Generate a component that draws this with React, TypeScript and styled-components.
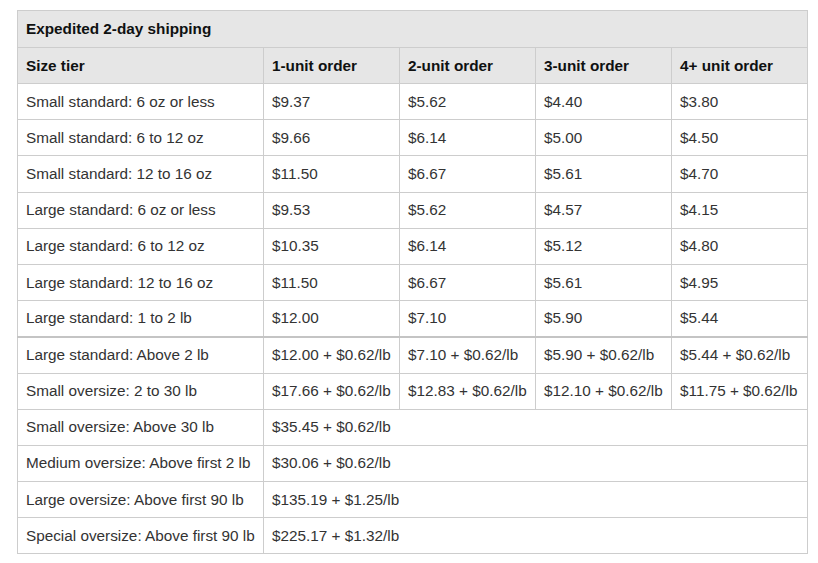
import React from "react";
import styled, { createGlobalStyle } from "styled-components";

const Global = createGlobalStyle`
  html, body { margin: 0; padding: 0; background: #fff; }
  body { font-family: "Liberation Sans", Arial, sans-serif; }
`;

const Page = styled.div`
  padding: 10px 0 0 17px;
`;

const Table = styled.table`
  border-collapse: collapse;
  table-layout: fixed;
  width: 790px;
  font-family: "Liberation Sans", Arial, sans-serif;
  font-size: 15.3px;
  color: #333;
  border: 1px solid #cdcdcd;
`;

const TitleCell = styled.th`
  background: #e6e6e6;
  color: #0f1111;
  font-weight: 700;
  text-align: left;
  height: 37px;
  padding: 0 8px;
  border: 1px solid #cdcdcd;
  box-sizing: border-box;
`;

const HeadCell = styled.th`
  background: #e6e6e6;
  color: #0f1111;
  font-weight: 700;
  text-align: left;
  height: 36px;
  padding: 0 8px;
  border: 1px solid #cdcdcd;
  box-sizing: border-box;
`;

const Row = styled.tr<{ $divider?: boolean }>`
  border-top: ${(p) => (p.$divider ? "2px solid #c4c4c4" : "1px solid #cdcdcd")};
`;

const Cell = styled.td`
  height: 36.2px;
  padding: 0 8px;
  border: 1px solid #cdcdcd;
  white-space: nowrap;
  box-sizing: border-box;
`;

type R = { tier: string; prices: string[]; divider?: boolean };

const rows: R[] = [
  { tier: "Small standard: 6 oz or less", prices: ["$9.37", "$5.62", "$4.40", "$3.80"] },
  { tier: "Small standard: 6 to 12 oz", prices: ["$9.66", "$6.14", "$5.00", "$4.50"] },
  { tier: "Small standard: 12 to 16 oz", prices: ["$11.50", "$6.67", "$5.61", "$4.70"] },
  { tier: "Large standard: 6 oz or less", prices: ["$9.53", "$5.62", "$4.57", "$4.15"] },
  { tier: "Large standard: 6 to 12 oz", prices: ["$10.35", "$6.14", "$5.12", "$4.80"] },
  { tier: "Large standard: 12 to 16 oz", prices: ["$11.50", "$6.67", "$5.61", "$4.95"] },
  { tier: "Large standard: 1 to 2 lb", prices: ["$12.00", "$7.10", "$5.90", "$5.44"] },
  {
    tier: "Large standard: Above 2 lb",
    prices: ["$12.00 + $0.62/lb", "$7.10 + $0.62/lb", "$5.90 + $0.62/lb", "$5.44 + $0.62/lb"],
    divider: true,
  },
  {
    tier: "Small oversize: 2 to 30 lb",
    prices: ["$17.66 + $0.62/lb", "$12.83 + $0.62/lb", "$12.10 + $0.62/lb", "$11.75 + $0.62/lb"],
  },
  { tier: "Small oversize: Above 30 lb", prices: ["$35.45 + $0.62/lb"] },
  { tier: "Medium oversize: Above first 2 lb", prices: ["$30.06 + $0.62/lb"] },
  { tier: "Large oversize: Above first 90 lb", prices: ["$135.19 + $1.25/lb"] },
  { tier: "Special oversize: Above first 90 lb", prices: ["$225.17 + $1.32/lb"] },
];

export default function App() {
  return (
    <Page>
      <Global />
      <Table>
        <colgroup>
          <col style={{ width: 246 }} />
          <col style={{ width: 136 }} />
          <col style={{ width: 136 }} />
          <col style={{ width: 136 }} />
          <col style={{ width: 136 }} />
        </colgroup>
        <thead>
          <tr>
            <TitleCell colSpan={5}>Expedited 2-day shipping</TitleCell>
          </tr>
          <tr>
            <HeadCell>Size tier</HeadCell>
            <HeadCell>1-unit order</HeadCell>
            <HeadCell>2-unit order</HeadCell>
            <HeadCell>3-unit order</HeadCell>
            <HeadCell>4+ unit order</HeadCell>
          </tr>
        </thead>
        <tbody>
          {rows.map((r) => (
            <Row key={r.tier} $divider={r.divider}>
              <Cell>{r.tier}</Cell>
              {r.prices.length === 1 ? (
                <Cell colSpan={4}>{r.prices[0]}</Cell>
              ) : (
                r.prices.map((p, i) => <Cell key={i}>{p}</Cell>)
              )}
            </Row>
          ))}
        </tbody>
      </Table>
    </Page>
  );
}
